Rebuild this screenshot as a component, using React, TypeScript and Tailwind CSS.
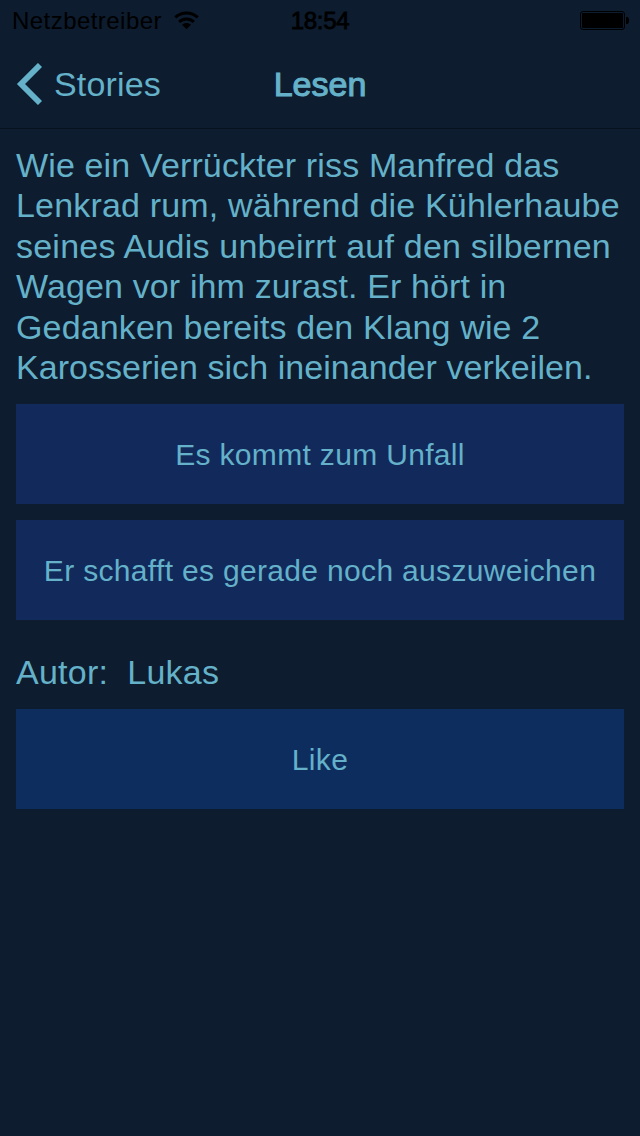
const story = [
  { text: "Wie ein Verrückter riss Manfred das", tracking: "tracking-[0.14px]" },
  { text: "Lenkrad rum, während die Kühlerhaube", tracking: "tracking-[0.18px]" },
  { text: "seines Audis unbeirrt auf den silbernen", tracking: "tracking-[0.23px]" },
  { text: "Wagen vor ihm zurast. Er hört in", tracking: "tracking-[0.13px]" },
  { text: "Gedanken bereits den Klang wie 2", tracking: "tracking-[0.14px]" },
  { text: "Karosserien sich ineinander verkeilen.", tracking: "tracking-[0.05px]" },
];

const actionClass =
  "flex h-[100px] w-full items-center justify-center whitespace-nowrap pt-0.5 text-[30px] leading-9 tracking-[0.33px]";

function WifiIcon() {
  return (
    <svg className="mb-0.5" width="25" height="19" viewBox="0 0 25 19" fill="none" stroke="currentColor" strokeWidth="3">
      <path d="M1.3 6.4C7.6 .4 17.4 .4 23.7 6.4" />
      <path d="M5.1 10.9C9.2 7 15.8 7 19.9 10.9" />
      <path d="M8 13.7C10.7 11.4 14.3 11.4 17 13.7L12.5 18.3Z" fill="currentColor" stroke="none" />
    </svg>
  );
}

function BatteryIcon() {
  return (
    <svg width="49" height="19" viewBox="0 0 49 19" fill="currentColor">
      <rect x=".5" y=".5" width="44" height="18" rx="2.5" fill="none" stroke="currentColor" />
      <rect x="2" y="2" width="41" height="15" rx="1" />
      <path d="M46 6h1c1.3 0 2 1.2 2 3.5S48.3 13 47 13h-1Z" />
    </svg>
  );
}

export default function App() {
  return (
    <div className="h-[1136px] w-[640px] overflow-hidden bg-[#0d1c2e] font-['Liberation_Sans',Arial,sans-serif] text-[#64b1c9] antialiased">
      <header className="h-[129px] border-b border-[#08121d]">
        <div className="grid h-10 grid-cols-3 items-center pt-0.5 pr-[11px] pl-3 text-[24px] text-black">
          <div className="flex items-center gap-3">
            <span className="tracking-[0.45px]">Netzbetreiber</span>
            <WifiIcon />
          </div>
          <span className="pr-px text-center tracking-[-0.3px] [-webkit-text-stroke:0.8px_currentColor]">18:54</span>
          <div className="flex justify-end pb-0.5">
            <BatteryIcon />
          </div>
        </div>
        <nav className="grid h-[88px] grid-cols-3 items-center px-4 text-[34px]">
          <div className="flex items-center gap-3">
            <svg width="26" height="42" viewBox="0 0 26 42" fill="none" stroke="currentColor" strokeWidth="5.8">
              <path d="M24 2 5 21 24 40" />
            </svg>
            <span className="tracking-[0.15px]">Stories</span>
          </div>
          <span className="text-center [-webkit-text-stroke:1.1px_currentColor]">Lesen</span>
        </nav>
      </header>
      <main className="px-4 pt-4">
        <div className="h-[259px]">
          {story.map((line) => (
            <p key={line.text} className={`h-[40.4px] whitespace-nowrap text-[34px] leading-[40.4px] ${line.tracking}`}>
              {line.text}
            </p>
          ))}
        </div>
        <div className="flex flex-col gap-4">
          <button className={`${actionClass} bg-[#112a5b]`}>Es kommt zum Unfall</button>
          <button className={`${actionClass} bg-[#112a5b]`}>Er schafft es gerade noch auszuweichen</button>
        </div>
        <div className="mt-8 flex h-[41px] items-center gap-[19px] text-[34px] tracking-[0.25px]">
          <span>Autor:</span>
          <span>Lukas</span>
        </div>
        <button className={`${actionClass} mt-4 bg-[#0e2d5f]`}>Like</button>
      </main>
    </div>
  );
}
